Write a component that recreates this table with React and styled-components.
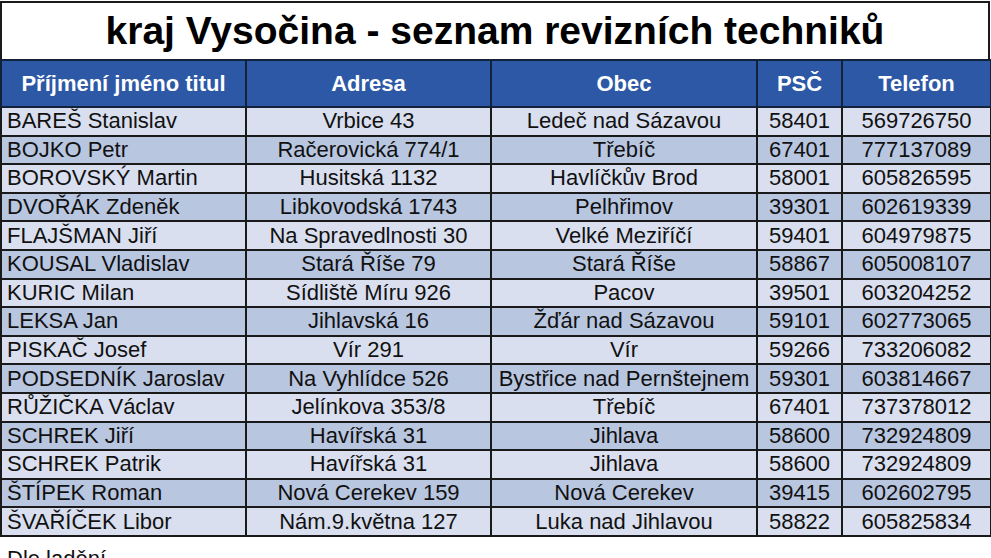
import React from "react";
import styled, { createGlobalStyle } from "styled-components";

const Global = createGlobalStyle`
  html, body { margin: 0; padding: 0; background: #fff; }
  body { font-family: "Liberation Sans", Arial, sans-serif; overflow: hidden; }
`;

const Page = styled.div`
  width: 991px;
  height: 558px;
  display: flex;
  flex-direction: column;
  padding-top: 1px;
  box-sizing: border-box;
  overflow: hidden;
  & > * { flex-shrink: 0; }
`;

const Title = styled.h1`
  margin: 0;
  width: 990px;
  box-sizing: border-box;
  height: 58px;
  border: 2px solid #1a1a1a;
  border-bottom: none;
  display: flex;
  align-items: center;
  justify-content: center;
  font-family: "Liberation Sans", Arial, sans-serif;
  font-size: 39px;
  font-weight: bold;
  color: #000;
`;

const Table = styled.table`
  width: 990px;
  border-collapse: collapse;
  table-layout: fixed;
  border: 2px solid #1a1a1a;
`;

const HeadCell = styled.th`
  background: #2c58a6;
  color: #fff;
  font-family: "Liberation Sans", Arial, sans-serif;
  font-size: 22px;
  font-weight: bold;
  height: 45px;
  padding: 0;
  border: 2px solid #14213a;
  text-align: center;
  vertical-align: middle;
`;

const Row = styled.tr`
  background: ${(p) => (p.$dark ? "#b9c6e0" : "#d9dfef")};
`;

const Cell = styled.td`
  font-family: "Liberation Sans", Arial, sans-serif;
  font-size: 22px;
  color: #111;
  height: 26.6px;
  padding: 0 ${(p) => (p.$left ? "5px" : "0")};
  border: 2px solid #1a1a1a;
  text-align: ${(p) => (p.$left ? "left" : "center")};
  vertical-align: middle;
  white-space: nowrap;
  overflow: hidden;
  line-height: 24px;
`;

const Note = styled.div`
  margin-top: 9px;
  padding-left: 7px;
  font-family: "Liberation Sans", Arial, sans-serif;
  font-size: 22px;
  color: #111;
`;

const rows = [
  ["BAREŠ Stanislav", "Vrbice 43", "Ledeč nad Sázavou", "58401", "569726750"],
  ["BOJKO Petr", "Račerovická 774/1", "Třebíč", "67401", "777137089"],
  ["BOROVSKÝ Martin", "Husitská 1132", "Havlíčkův Brod", "58001", "605826595"],
  ["DVOŘÁK Zdeněk", "Libkovodská 1743", "Pelhřimov", "39301", "602619339"],
  ["FLAJŠMAN Jiří", "Na Spravedlnosti 30", "Velké Meziříčí", "59401", "604979875"],
  ["KOUSAL Vladislav", "Stará Říše 79", "Stará Říše", "58867", "605008107"],
  ["KURIC Milan", "Sídliště Míru 926", "Pacov", "39501", "603204252"],
  ["LEKSA Jan", "Jihlavská 16", "Žďár nad Sázavou", "59101", "602773065"],
  ["PISKAČ Josef", "Vír 291", "Vír", "59266", "733206082"],
  ["PODSEDNÍK Jaroslav", "Na Vyhlídce 526", "Bystřice nad Pernštejnem", "59301", "603814667"],
  ["RŮŽIČKA Václav", "Jelínkova 353/8", "Třebíč", "67401", "737378012"],
  ["SCHREK Jiří", "Havířská 31", "Jihlava", "58600", "732924809"],
  ["SCHREK Patrik", "Havířská 31", "Jihlava", "58600", "732924809"],
  ["ŠTÍPEK Roman", "Nová Cerekev 159", "Nová Cerekev", "39415", "602602795"],
  ["ŠVAŘÍČEK Libor", "Nám.9.května 127", "Luka nad Jihlavou", "58822", "605825834"],
];

const widths = [245, 245, 266, 85, 149];
const heads = ["Příjmení jméno titul", "Adresa", "Obec", "PSČ", "Telefon"];

export default function App() {
  return (
    <Page>
      <Global />
      <Title>kraj Vysočina - seznam revizních techniků</Title>
      <Table>
        <colgroup>
          {widths.map((w, i) => (
            <col key={i} style={{ width: w }} />
          ))}
        </colgroup>
        <thead>
          <tr>
            {heads.map((h) => (
              <HeadCell key={h}>{h}</HeadCell>
            ))}
          </tr>
        </thead>
        <tbody>
          {rows.map((r, i) => (
            <Row key={i} $dark={i % 2 === 1}>
              {r.map((c, j) => (
                <Cell key={j} $left={j === 0}>
                  {c}
                </Cell>
              ))}
            </Row>
          ))}
        </tbody>
      </Table>
      <Note>Dle ladění</Note>
    </Page>
  );
}
